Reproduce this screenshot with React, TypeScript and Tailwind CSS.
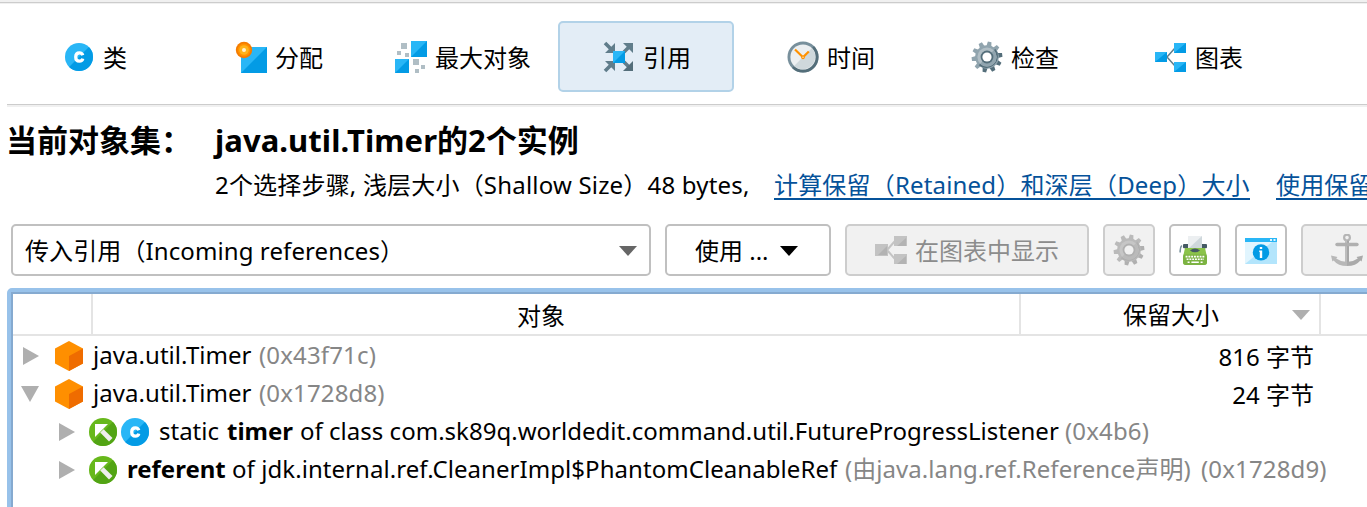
import type { ReactNode } from "react";

const Diag = ({ x, y, w, h }: { x: number; y: number; w: number; h: number }) => (
  <>
    <rect x={x} y={y} width={w} height={h} fill="#29b6f6" />
    <path d={`M${x + w} ${y}V${y + h}H${x}Z`} fill="#039be5" />
  </>
);

const Svg = ({ children, size = 32 }: { children: ReactNode; size?: number }) => (
  <svg viewBox={`0 0 ${size} ${size}`} width={size} height={size} className="block shrink-0">
    {children}
  </svg>
);

const ClassDisc = () => (
  <>
    <circle cx="16" cy="16" r="14" fill="#29b6f6" />
    <path d="M25.9 6.1A14 14 0 0 1 6.1 25.9Z" fill="#039be5" />
    <path d="M19.8 14.3C19.3 12.6 18.1 11.8 16.4 11.8C13.9 11.8 12.7 13.5 12.7 16C12.7 18.5 13.9 20.2 16.4 20.2C18.2 20.2 19.4 19.4 19.8 17.7" fill="none" stroke="#fff" strokeWidth="3.2" />
  </>
);

const ClassIcon = () => <Svg><ClassDisc /></Svg>;

const AllocationIcon = () => (
  <Svg>
    <Diag x={6} y={6} w={26} h={26} />
    <circle cx="9" cy="9" r="8.2" fill="#f57c00" />
    <circle cx="9" cy="9" r="6.4" fill="#ff9100" />
    <circle cx="9" cy="9" r="4.8" fill="#ffb31a" />
    <circle cx="9" cy="9" r="2" fill="#fff3d0" />
  </Svg>
);

const BiggestIcon = () => (
  <Svg>
    <Diag x={16} y={0} w={16} h={16} />
    <Diag x={0} y={18} w={14} h={14} />
    <g fill="#b0bec5">
      <rect x="6" y="2" width="6" height="6" />
      <rect x="2" y="10" width="4" height="4" />
      <rect x="10" y="12" width="4" height="4" />
      <rect x="18" y="18" width="6" height="6" />
      <rect x="26" y="24" width="4" height="4" />
      <rect x="20" y="28" width="4" height="4" />
    </g>
  </Svg>
);

const ReferencesIcon = () => (
  <Svg>
    <g stroke="#607d8b" strokeWidth="3.6">
      <path d="M2 2L9 9M2 30L9 23M21 11L27 5M21 21L27 27" />
    </g>
    <path d="M12 2V12H2ZM12 30V20H2ZM20 2H30V12Z" fill="#607d8b" />
    <path d="M30 20V30H20Z" fill="#546e7a" />
    <Diag x={10} y={10} w={12} h={12} />
  </Svg>
);

const ClockIcon = () => (
  <Svg>
    <circle cx="16" cy="16" r="15.5" fill="#78909c" />
    <path d="M27 5A15.5 15.5 0 0 1 5 27Z" fill="#546e7a" />
    <circle cx="16" cy="16" r="12.6" fill="#eceff1" />
    <path d="M24.9 7.1A12.6 12.6 0 0 1 7.1 24.9Z" fill="#cfd8dc" />
    <path d="M8 8.5L16 16.3L21.8 10.5" fill="none" stroke="#ff9100" strokeWidth="2.2" />
    <circle cx="16" cy="16.4" r="1.8" fill="#ff9100" />
    <circle cx="16" cy="16.2" r=".8" fill="#ffe0b2" />
  </Svg>
);

const teeth = [10, 46, 82, 118, 154, 190, 226, 262, 298, 334];

const Gear = ({ dark, mid, light, hole }: { dark: string; mid: string; light: string; hole: string }) => (
  <Svg>
    <g fill={light}>
      {teeth.map((a) => (
        <path key={a} d="M13.4 6L14.2.6H17.8L18.6 6Z" fill={a > 60 && a < 220 ? dark : light} transform={`rotate(${a} 16 16)`} />
      ))}
    </g>
    <circle cx="16" cy="16" r="11.8" fill={light} />
    <path d="M24.3 7.7A11.8 11.8 0 0 1 7.7 24.3Z" fill={dark} />
    <circle cx="16" cy="16" r="9.6" fill={mid} />
    <path d="M22.8 9.2A9.6 9.6 0 0 1 9.2 22.8Z" fill={light} />
    <circle cx="16" cy="16" r="6.4" fill={dark} />
    <circle cx="16" cy="16" r="4.6" fill={hole} />
  </Svg>
);

const GraphIcon = () => (
  <Svg>
    <path d="M12 16L20 7M12 16L20 25" stroke="#607d8b" strokeWidth="1.5" />
    <Diag x={0} y={11} w={12} h={10} />
    <Diag x={19} y={2} w={12} h={10} />
    <Diag x={19} y={21} w={12} h={10} />
  </Svg>
);

const GraphDisabledIcon = () => (
  <Svg>
    <path d="M12 16L20 7M12 16L20 25" stroke="#c4c4c4" strokeWidth="2" />
    <g fill="#c3c3c3">
      <rect x="0" y="10" width="13" height="12" />
      <rect x="19" y="2" width="13" height="10" />
      <rect x="19" y="20" width="13" height="10" />
    </g>
    <path d="M12 12V21H3ZM31 4V12H22ZM31 22V30H22Z" fill="#b3b3b3" />
  </Svg>
);

const TypewriterIcon = () => (
  <Svg>
    <path d="M2.8 11.5Q.8 13.5 1.2 18.5" fill="none" stroke="#78909c" strokeWidth="1.6" />
    <rect x="4" y="10" width="24" height="4.2" rx="1" fill="#455a64" />
    <path d="M9 14.5V2H23V14.5Z" fill="#eceff1" />
    <path d="M23 2V14.5H9.5Z" fill="#cfd8dc" />
    <path d="M6 14H26L28 23V28Q28 31 25 31H7Q4 31 4 28V23Z" fill="#8bc34a" />
    <path d="M4 25.5V23L4.6 20.5H27.4L28 23V28Q28 31 25 31H7Q4 31 4 28Z" fill="#7cb342" />
    <path d="M11 16.4Q16 12.6 21 16.4Q16 20.2 11 16.4Z" fill="#455a64" />
    <path d="M6.6 22.6H26M7.6 25.2H25" stroke="#fff" strokeWidth="1.6" strokeDasharray="1.9 .9" />
    <path d="M12.4 28.2H19.8M8.6 28.2H10.6M21.6 28.2H23.6" stroke="#fff" strokeWidth="1.6" />
  </Svg>
);

const InfoWindowIcon = () => (
  <Svg>
    <rect x="0" y="4" width="32" height="26" fill="#e1f5fe" />
    <path d="M0 30L27 8H32V30Z" fill="#b3e5fc" />
    <rect x="0" y="4" width="32" height="4" fill="#29b6f6" />
    <path d="M25 5H27V7H25ZM28.5 5H30.5V7H28.5Z" fill="#e1f5fe" />
    <circle cx="16" cy="18.4" r="8.2" fill="#039be5" />
    <path d="M14.8 13H17.2V15H14.8ZM14.2 16.4H17.2V24H14.8V18H14.2Z" fill="#fff" />
  </Svg>
);

const AnchorIcon = () => (
  <Svg>
    <circle cx="16" cy="3.6" r="2.9" fill="none" stroke="#b5b5b5" strokeWidth="2.2" />
    <path d="M14 6.4H18V28L16 31L14 28Z" fill="#bdbdbd" />
    <path d="M16 6.4H18V28L16 31Z" fill="#a6a6a6" />
    <path d="M6 10.5H26" stroke="#b0b0b0" strokeWidth="3.4" strokeLinecap="round" />
    <path d="M0 21.5L6.5 23L5.2 24.5Q10 28 16 27.6V32Q7 32 2.6 26.5L1.4 27.4Z" fill="#b8b8b8" />
    <path d="M32 21.5L25.5 23L26.8 24.5Q22 28 16 27.6V32Q25 32 29.4 26.5L30.6 27.4Z" fill="#aaaaaa" />
  </Svg>
);

const CubeIcon = () => (
  <Svg>
    <path d="M16 1L30 8.5V23.5L16 31L2 23.5V8.5Z" fill="#ff8f00" />
    <path d="M30 8.5V23.5L16 31V16Z" fill="#ef6c00" />
  </Svg>
);

const ArrowIcon = () => (
  <Svg>
    <circle cx="16" cy="16" r="14" fill="#67b81b" />
    <path d="M25.9 6.1A14 14 0 0 1 6.1 25.9Z" fill="#52a414" />
    <path d="M13.2 16.6L16.6 13.2L25.5 22L22 25.5Z" fill="#eeeeee" />
    <path d="M8 8H21L8 21Z" fill="#fff" />
  </Svg>
);

const Right = () => (
  <svg viewBox="0 0 16 18" width="16" height="18" className="mt-[2px] block shrink-0">
    <path d="M0 0L16 9L0 18Z" fill="#afafaf" />
  </svg>
);

const Down = ({ color, h = 10 }: { color: string; h?: number }) => (
  <svg viewBox={`0 0 18 ${h}`} width="18" height={h} className="mt-[2px] block shrink-0">
    <path d={`M0 0H18L9 ${h}Z`} fill={color} />
  </svg>
);

const tabs: { label: string; icon: ReactNode; active?: boolean }[] = [
  { label: "类", icon: <ClassIcon /> },
  { label: "分配", icon: <AllocationIcon /> },
  { label: "最大对象", icon: <BiggestIcon /> },
  { label: "引用", icon: <ReferencesIcon />, active: true },
  { label: "时间", icon: <ClockIcon /> },
  { label: "检查", icon: <Gear dark="#546e7a" mid="#b0bec5" light="#90a4ae" hole="#fff" /> },
  { label: "图表", icon: <GraphIcon /> },
];

const box = "flex h-[52px] shrink-0 items-center rounded-[5px] border-2";
const enabled = "border-[#c0c0c0] bg-white";
const disabled = "border-[#cdcdcd] bg-[#f1f1f1] text-[#8c8c8c]";
const link = "inline-block h-[34px] border-b-2 border-[#05529a] leading-[38px] tracking-[0.18px] text-[#05529a]";

export default function App() {
  return (
    <div className="flex h-[507px] w-[1367px] flex-col overflow-hidden bg-white font-['Noto_Sans','Noto_Sans_CJK_SC',sans-serif] text-[24px] leading-[38px] whitespace-pre text-black">
      <div className="h-[4px] shrink-0 border-b border-[#f0f0f0] bg-[#f0f0f0] pt-[2px]">
        <div className="h-px bg-[#cccccc]" />
      </div>

      <nav className="ml-[6px] flex h-[100px] shrink-0 gap-2 pt-[17px]">
        {tabs.map((t) => (
          <div
            key={t.label}
            className={
              "flex h-[71px] w-[176px] shrink-0 items-center justify-center gap-2 rounded-[5px] border-2 pl-[2px] " +
              (t.active ? "border-[#b2d2e8] bg-[#e3edf6]" : "border-transparent")
            }
          >
            {t.icon}
            <span className="pt-px font-['Noto_Sans_CJK_SC',sans-serif]">{t.label}</span>
          </div>
        ))}
      </nav>
      <div className="ml-[7px] h-[3px] shrink-0 border-t border-[#cccccc] bg-[#f0f0f0]" />

      <header className="flex h-[117px] shrink-0 pt-[13px] pl-[6px]">
        <div className="w-[209px] shrink-0 text-[31px] leading-[40px] font-bold">当前对象集：</div>
        <div>
          <div className="text-[31px] leading-[40px] font-bold">
            <span className="tracking-[0.06px]">java.util.Timer</span>的2个实例
          </div>
          <div className="flex items-start pt-[6px]">
            <span className="w-[559px] shrink-0 tracking-[0.19px]">2个选择步骤, 浅层大小（Shallow Size）48 bytes,</span>
            <div className="flex w-[502px] shrink-0">
              <a className={link}>计算保留（Retained）和深层（Deep）大小</a>
            </div>
            <a className={link}>使用保留</a>
          </div>
        </div>
      </header>

      <div className="flex h-[64px] shrink-0 gap-[14px] pl-[11px]">
        <div className={`${box} ${enabled} w-[640px] justify-between pr-[12px] pl-[12px]`}>
          <span className="pt-[2px] tracking-[0.1px]">传入引用（Incoming references）</span>
          <Down color="#666666" />
        </div>
        <div className={`${box} ${enabled} w-[166px] pl-[28px]`}>
          <span className="w-[85px] pt-[2px]">使用 ...</span>
          <Down color="#000000" />
        </div>
        <div className={`${box} ${disabled} w-[244px] gap-2 pl-[28px]`}>
          <GraphDisabledIcon />
          <span className="pt-[2px]">在图表中显示</span>
        </div>
        <div className={`${box} ${disabled} w-[52px] justify-center`}>
          <Gear dark="#b0b0b0" mid="#c6c6c6" light="#bababa" hole="#f1f1f1" />
        </div>
        <div className={`${box} ${enabled} w-[52px] justify-center`}>
          <TypewriterIcon />
        </div>
        <div className={`${box} ${enabled} w-[52px] justify-center`}>
          <InfoWindowIcon />
        </div>
        <div className={`${box} ${disabled} w-[120px] pl-[28px]`}>
          <AnchorIcon />
        </div>
      </div>

      <main className="ml-[7px] h-[240px] w-[1380px] shrink-0 rounded-[5px] border-4 border-[#98c2ea]">
        <div className="h-full border-2 border-[#85aad0]">
          <div className="flex h-[42px] border-b-2 border-[#e4e4e4] leading-[42px]">
            <div className="w-[80px] shrink-0 border-r-2 border-[#e4e4e4]" />
            <div className="w-[928px] shrink-0 border-r-2 border-[#e4e4e4] pt-px pr-[30px] text-center">对象</div>
            <div className="flex w-[300px] shrink-0 items-center justify-between border-r-2 border-[#e4e4e4] pr-[9px] pl-[102px]">
              <span className="pt-[2px]">保留大小</span>
              <Down color="#afafaf" />
            </div>
          </div>

          <div className="flex h-[38px] items-center pl-[10px]">
            <Right />
            <div className="mt-[2px] ml-[14px]"><CubeIcon /></div>
            <span className="ml-[8px] w-[166px] tracking-[0.05px]">java.util.Timer</span>
            <span className="tracking-[0.15px] text-[#868686]">(0x43f71c)</span>
            <span className="mr-[67px] ml-auto pt-[3px]">816 字节</span>
          </div>
          <div className="flex h-[38px] items-center pl-[8px]">
            <Down color="#afafaf" h={16} />
            <div className="mt-[2px] ml-[14px]"><CubeIcon /></div>
            <span className="ml-[8px] w-[166px] tracking-[0.05px]">java.util.Timer</span>
            <span className="tracking-[0.15px] text-[#868686]">(0x1728d8)</span>
            <span className="mr-[67px] ml-auto pt-[3px]">24 字节</span>
          </div>
          <div className="flex h-[38px] items-center pl-[46px]">
            <Right />
            <div className="mt-[2px] ml-[12px] flex"><ArrowIcon /><ClassIcon /></div>
            <span className="ml-[8px] w-[68px]">static</span>
            <b className="w-[73px]">timer</b>
            <span className="w-[765px] tracking-[0.02px]">of class com.sk89q.worldedit.command.util.FutureProgressListener</span>
            <span className="tracking-[0.15px] text-[#868686]">(0x4b6)</span>
          </div>
          <div className="flex h-[38px] items-center pl-[46px]">
            <Right />
            <div className="mt-[2px] ml-[12px]"><ArrowIcon /></div>
            <b className="ml-[8px] w-[105px]">referent</b>
            <span className="w-[613px] tracking-[0.06px]">of jdk.internal.ref.CleanerImpl$PhantomCleanableRef</span>
            <span className="w-[356px] tracking-[0.06px] text-[#868686]">(由java.lang.ref.Reference声明)</span>
            <span className="tracking-[0.15px] text-[#868686]">(0x1728d9)</span>
          </div>
        </div>
      </main>
    </div>
  );
}
